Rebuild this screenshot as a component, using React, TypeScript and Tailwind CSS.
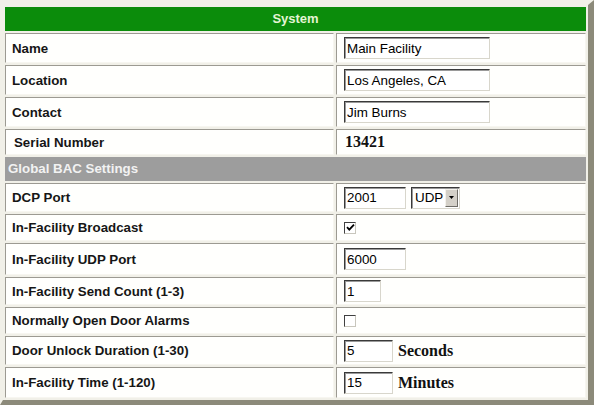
import type { ReactNode } from "react";

const sans = "font-['Liberation_Sans',Arial,sans-serif]";
const serif = "font-['Liberation_Serif','Times_New_Roman',serif]";

const TextBox = ({ value, width }: { value: string; width: string }) => (
  <div
    className={`${width} h-[22px] flex items-center bg-white border border-t-[#3a3a3a] border-l-[#3a3a3a] border-b-[#d8d6cc] border-r-[#d8d6cc] shadow-[inset_1px_1px_0_#9a9a9a] pl-[2px] pt-[1px] text-[13.4px] text-black leading-none`}
  >
    {value}
  </div>
);

const CheckBox = ({ checked }: { checked?: boolean }) => (
  <div className="w-[12px] h-[12px] bg-white border border-t-[#404040] border-l-[#404040] border-b-[#c8c6bc] border-r-[#c8c6bc] flex items-center justify-center">
    {checked && (
      <svg width="9" height="9" viewBox="0 0 9 9">
        <path d="M1 4.2 L3.3 6.6 L8 1.6" fill="none" stroke="#000" strokeWidth="1.8" />
      </svg>
    )}
  </div>
);

const Row = ({
  label,
  h,
  children,
  indent,
}: {
  label: string;
  h: string;
  children?: ReactNode;
  indent?: boolean;
}) => (
  <div className={`flex gap-[2px] ${h}`}>
    <div
      className={`w-[329px] flex items-center pt-[1px] ${indent ? "pl-[8px]" : "pl-[6px]"} bg-[#fffffd] border border-t-[#9c9a92] border-l-[#9c9a92] border-b-[#f7f6f0] border-r-[#f7f6f0] text-[13.3px] font-bold text-[#161616]`}
    >
      {label}
    </div>
    <div className="w-[250px] flex items-center gap-[5px] pl-[7px] bg-[#fffffd] border border-t-[#9c9a92] border-l-[#9c9a92] border-b-[#f7f6f0] border-r-[#f7f6f0]">
      {children}
    </div>
  </div>
);

export default function App() {
  return (
    <div className={`w-[594px] h-[405px] overflow-hidden bg-[#f1f0e8] ${sans}`}>
      <div className="flex flex-col gap-[2px] p-[2px] border-t-[5px] border-l-[3px] border-r-[6px] border-b-[5px] border-t-[#f1f0e8] border-l-[#f1f0e8] border-r-[#8c8a7a] border-b-[#8c8a7a]">
        <div className="h-[24px] flex items-center justify-center bg-[#0b8c0b] text-[13px] font-bold text-[#e4f5d4]">
          System
        </div>
        <Row label="Name" h="h-[30px]">
          <TextBox value="Main Facility" width="w-[146px]" />
        </Row>
        <Row label="Location" h="h-[30px]">
          <TextBox value="Los Angeles, CA" width="w-[146px]" />
        </Row>
        <Row label="Contact" h="h-[30px]">
          <TextBox value="Jim Burns" width="w-[146px]" />
        </Row>
        <Row label="Serial Number" h="h-[26px]" indent>
          <span className={`${serif} text-[16px] font-bold text-[#111] pl-[1px]`}>13421</span>
        </Row>
        <div className="h-[24px] flex items-center pl-[3px] bg-[#9d9d9d] text-[13.3px] font-bold text-[#f2f2f2]">
          Global BAC Settings
        </div>
        <Row label="DCP Port" h="h-[29px]">
          <TextBox value="2001" width="w-[62px]" />
          <div className="w-[49px] h-[22px] flex items-center bg-white border border-t-[#3a3a3a] border-l-[#3a3a3a] border-b-[#d8d6cc] border-r-[#d8d6cc] shadow-[inset_1px_1px_0_#9a9a9a]">
            <span className="flex-1 pl-[3px] text-[13.4px] text-black leading-none">UDP</span>
            <div className="w-[13px] h-[18px] mr-[1px] flex items-center justify-center bg-[#d4d0c8] border border-t-[#f4f2ec] border-l-[#f4f2ec] border-b-[#6e6c66] border-r-[#6e6c66]">
              <svg width="5" height="3" viewBox="0 0 5 3">
                <path d="M0 0 H5 L2.5 3 Z" fill="#000" />
              </svg>
            </div>
          </div>
        </Row>
        <Row label="In-Facility Broadcast" h="h-[27px]">
          <CheckBox checked />
        </Row>
        <Row label="In-Facility UDP Port" h="h-[32px]">
          <TextBox value="6000" width="w-[62px]" />
        </Row>
        <Row label="In-Facility Send Count (1-3)" h="h-[28px]">
          <TextBox value="1" width="w-[37px]" />
        </Row>
        <Row label="Normally Open Door Alarms" h="h-[27px]">
          <CheckBox />
        </Row>
        <Row label="Door Unlock Duration (1-30)" h="h-[29px]">
          <TextBox value="5" width="w-[49px]" />
          <span className={`${serif} text-[16px] font-bold text-[#111]`}>Seconds</span>
        </Row>
        <Row label="In-Facility Time (1-120)" h="h-[31px]">
          <TextBox value="15" width="w-[49px]" />
          <span className={`${serif} text-[16px] font-bold text-[#111]`}>Minutes</span>
        </Row>
      </div>
    </div>
  );
}
